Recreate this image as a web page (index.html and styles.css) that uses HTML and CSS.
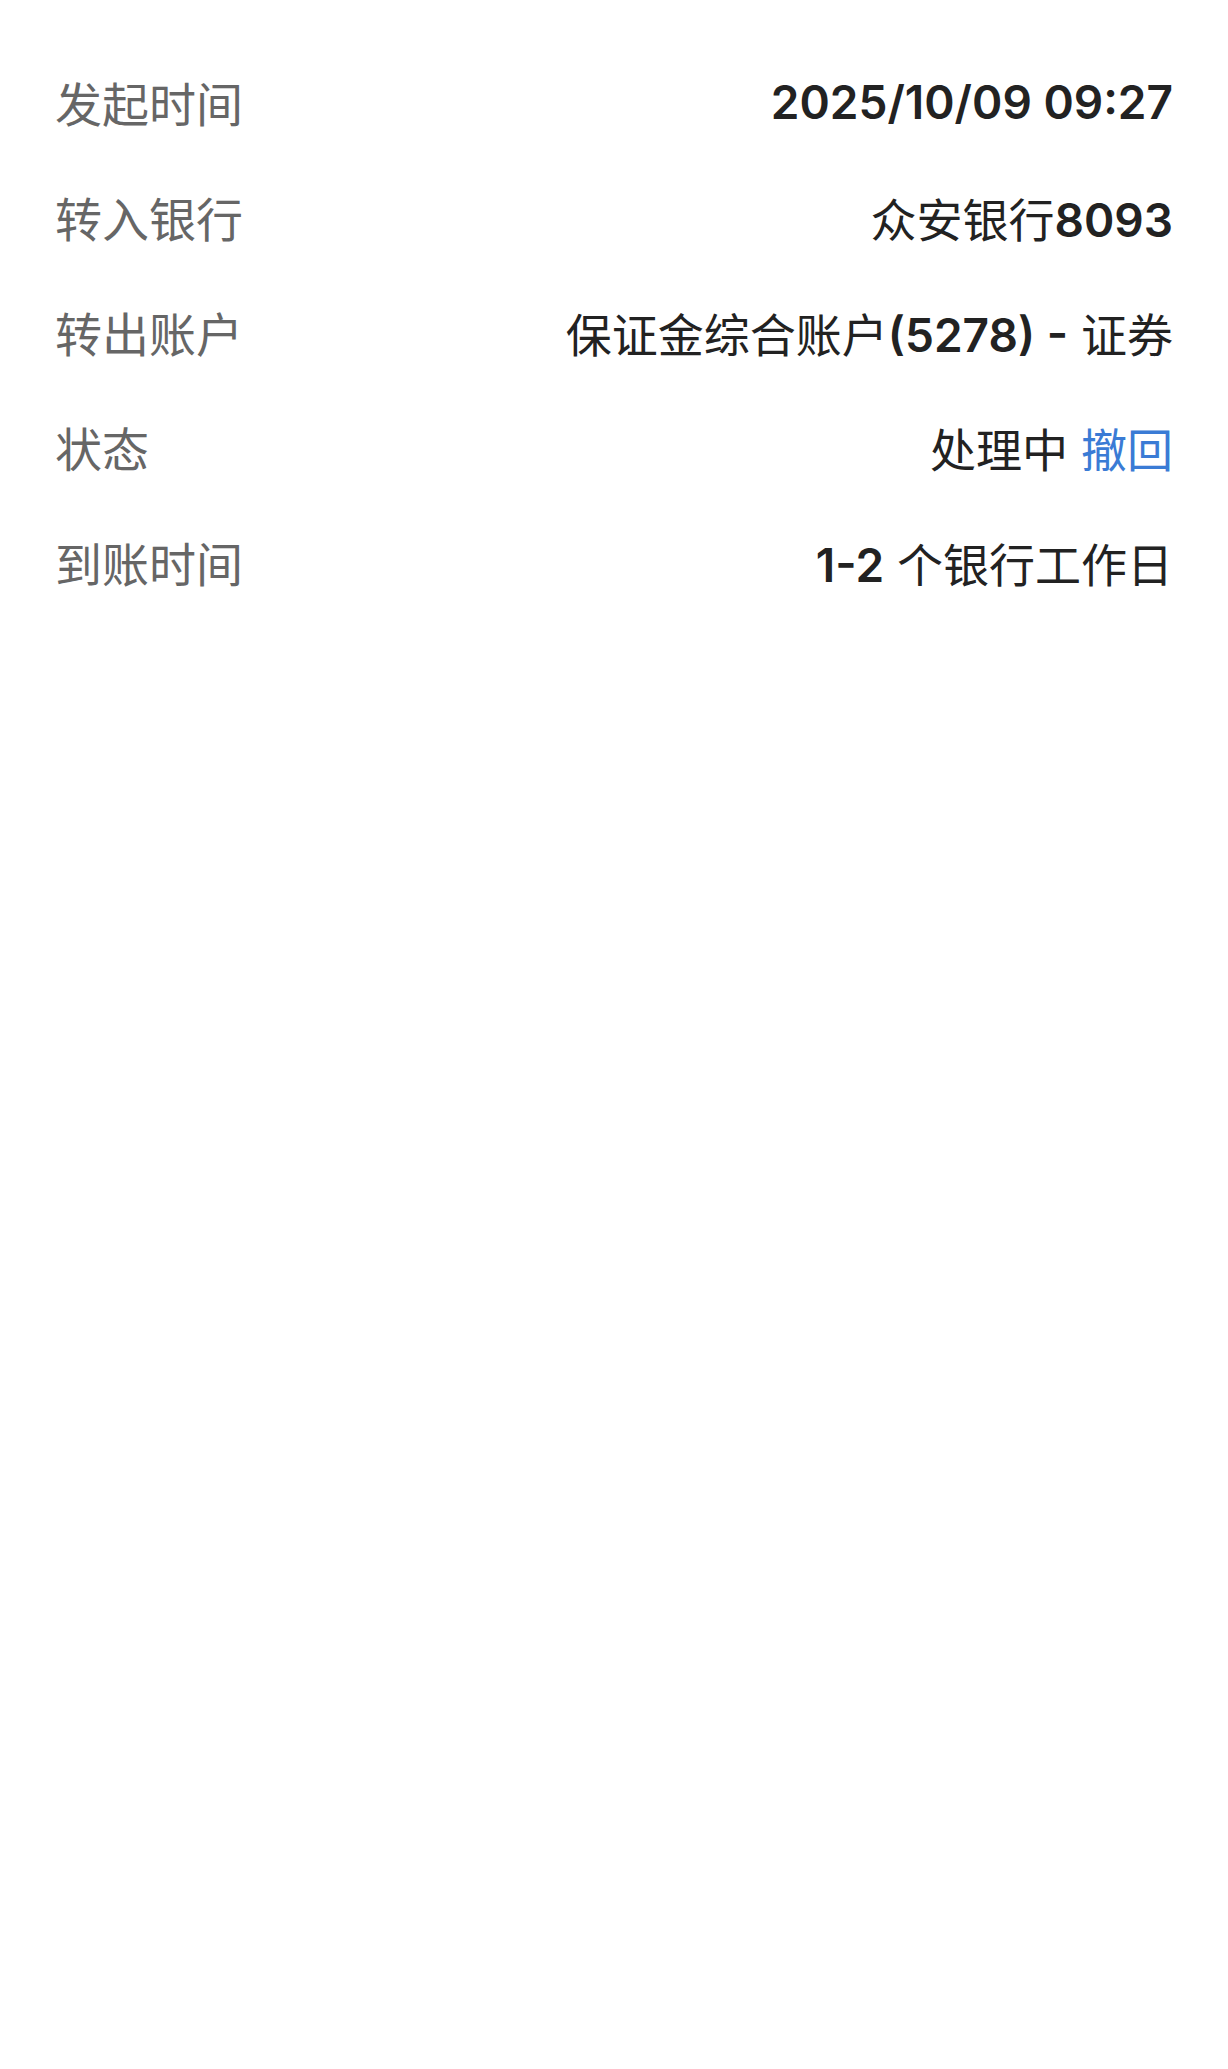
FILE: index.html
```html
<!DOCTYPE html>
<html lang="zh-CN">
<head>
    <meta charset="UTF-8">
    <meta name="viewport" content="width=device-width, initial-scale=1.0">
    <title>转账详情</title>
    <link rel="stylesheet" href="styles.css">
</head>
<body>
    <div class="detail-list">
        <div class="row">
            <span class="label">发起时间</span>
            <span class="value"><b class="num">2025/10/09 09:27</b></span>
        </div>
        <div class="row">
            <span class="label">转入银行</span>
            <span class="value">众安银行<b class="num">8093</b></span>
        </div>
        <div class="row">
            <span class="label">转出账户</span>
            <span class="value">保证金综合账户<b class="num">(5278) -</b> 证券</span>
        </div>
        <div class="row">
            <span class="label">状态</span>
            <span class="value">处理中 <a class="link" href="#">撤回</a></span>
        </div>
        <div class="row">
            <span class="label">到账时间</span>
            <span class="value"><b class="num">1-2</b> 个银行工作日</span>
        </div>
    </div>
</body>
</html>
```

FILE: styles.css
```css
* {
    margin: 0;
    padding: 0;
    box-sizing: border-box;
}

body {
    background: #ffffff;
    font-family: Inter, "Noto Sans CJK SC", sans-serif;
    color: #222222;
}

.detail-list {
    padding: 44px 55px 0;
}

.row {
    height: 115px;
    display: flex;
    align-items: center;
    justify-content: space-between;
    font-size: 46px;
}

.label {
    color: #666666;
    font-size: 47px;
}

.value {
    color: #222222;
    text-align: right;
}

.num {
    font-weight: 600;
}

.link {
    color: #3a7bd5;
    text-decoration: none;
}
```
